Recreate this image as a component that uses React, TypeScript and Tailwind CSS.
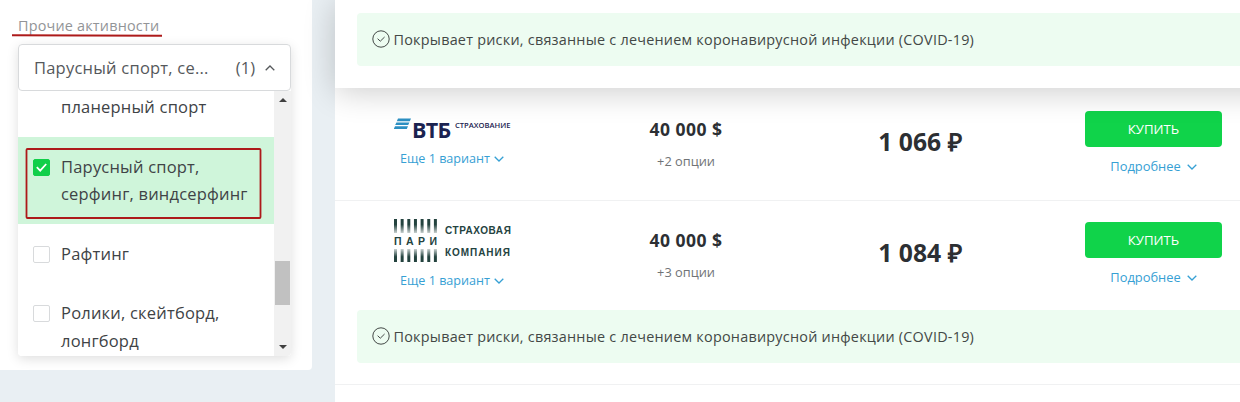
import React from "react";
import clsx from "clsx";

interface IActivity {
    lines: string[];
    checked?: boolean;
}

interface IOffer {
    id: string;
    logo: React.ReactNode;
    sum: string;
    options: string;
    price: string;
    covid?: boolean;
}

const activities: IActivity[] = [
    { lines: ["Парусный спорт,", "серфинг, виндсерфинг"], checked: true },
    { lines: ["Рафтинг"] },
    { lines: ["Ролики, скейтборд,", "лонгборд"] },
];

const Chevron: React.FC<{ up?: boolean; className?: string }> = ({ up, className }) => (
    <svg viewBox="0 0 10 6" fill="none" stroke="currentColor" strokeWidth="1.3" className={clsx("h-1.5 w-2.5", className)}>
        <path d={up ? "M0.7 5.2 5 1l4.3 4.2" : "M0.7 0.8 5 5l4.3-4.2"} />
    </svg>
);

const VtbLogo = () => (
    <div className="flex h-[22px] w-[118px] items-start text-[#1b2350]">
        <svg viewBox="0 0 17 12" className="ml-px h-3 w-[17px] shrink-0">
            <path d="M4 0.5h13l-1.2 2.7H2.8zM2.4 4.4h13l-1.2 2.7h-13zM1 8.3h13L12.8 11h-13z" fill="#2c8fc2" />
        </svg>
        <span className="mt-[2px] ml-px w-[39px] text-[21.5px] leading-5 font-bold tracking-[-0.7px]">ВТБ</span>
        <span className="mt-0.5 ml-[4px] text-[7.6px] leading-[10px] font-semibold whitespace-nowrap">СТРАХОВАНИЕ</span>
    </div>
);

const bars = [0, 1, 2, 3, 4, 5, 6];

const PariLogo = () => (
    <div className="flex h-[43px] w-[118px] gap-2 pl-px font-['Liberation_Sans',sans-serif] font-bold text-[#24433f]">
        <div className="flex w-[43px] flex-col justify-between">
            <svg viewBox="0 0 43 14" className="h-3.5 w-[43px]">
                <defs>
                    <linearGradient id="fadeDown" x1="0" y1="0" x2="0" y2="1">
                        <stop offset="0.4" stopColor="#24433f" />
                        <stop offset="1" stopColor="#24433f" stopOpacity="0.25" />
                    </linearGradient>
                </defs>
                {bars.map((bar) => (
                    <rect key={bar} x={bar * 6.65} width="3" height="14" fill="url(#fadeDown)" />
                ))}
            </svg>
            <div className="flex justify-between text-[10.5px] leading-[10px]">
                <span>П</span>
                <span>А</span>
                <span>Р</span>
                <span>И</span>
            </div>
            <svg viewBox="0 0 43 13" className="h-[13px] w-[43px]">
                <defs>
                    <linearGradient id="fadeUp" x1="0" y1="1" x2="0" y2="0">
                        <stop offset="0.4" stopColor="#24433f" />
                        <stop offset="1" stopColor="#24433f" stopOpacity="0.25" />
                    </linearGradient>
                </defs>
                {bars.map((bar) => (
                    <rect key={bar} x={bar * 6.65} width="3" height="13" fill="url(#fadeUp)" />
                ))}
            </svg>
        </div>
        <div className="flex flex-col gap-[10.5px] pt-1.5 text-[10px] leading-[11px]">
            <span className="tracking-[0.55px]">СТРАХОВАЯ</span>
            <span className="tracking-[0.95px]">КОМПАНИЯ</span>
        </div>
    </div>
);

const offers: IOffer[] = [
    { id: "vtb", logo: <VtbLogo />, sum: "40 000 $", options: "+2 опции", price: "1 066 ₽" },
    { id: "pari", logo: <PariLogo />, sum: "40 000 $", options: "+3 опции", price: "1 084 ₽", covid: true },
];

const Checkbox: React.FC<{ checked?: boolean }> = ({ checked }) => (
    <span
        className={clsx(
            "mt-1.5 flex size-[17px] shrink-0 items-center justify-center rounded-xs border",
            checked ? "border-[#10cf49] bg-[#10cf49]" : "border-[#d8dadc] bg-white",
        )}
    >
        {checked && (
            <svg viewBox="0 0 11 9" fill="none" stroke="white" strokeWidth="1.8" className="h-[9px] w-[11px]">
                <path d="M0.8 4.2 4.2 7.6 10.2 1" />
            </svg>
        )}
    </span>
);

const CovidNote = () => (
    <div className="ml-[22px] flex h-[53px] items-center rounded-l bg-[#edfcf1] pl-[15px] text-[#434846]">
        <svg viewBox="0 0 18 18" fill="none" stroke="currentColor" className="mr-[3.5px] mb-0.5 size-[18px]">
            <circle cx="9" cy="9" r="8.2" />
            <path d="m5.6 8.7 2.7 2.5 4.3-4.2" />
        </svg>
        <span className="text-[14.4px] tracking-[0.24px] whitespace-nowrap">
            Покрывает риски, связанные с лечением коронавирусной инфекции (COVID-19)
        </span>
    </div>
);

const OfferRow: React.FC<{ offer: IOffer }> = ({ offer }) => (
    <div className={clsx("flex", offer.covid ? "h-[109px]" : "h-28 pt-0.5")}>
        <div className={clsx("flex w-[234px] flex-col items-center", offer.covid ? "pt-[18px]" : "pt-[28px]")}>
            {offer.logo}
            <button className="mt-[9px] flex h-5 items-center gap-1 text-[12.6px] text-[#36a0d4]">
                Еще 1 вариант <Chevron />
            </button>
        </div>
        <div className="flex w-[234px] flex-col items-center pt-[27px]">
            <span className="text-[17.5px] leading-6 font-bold tracking-[0.5px] text-[#2c2f33]">{offer.sum}</span>
            <span className="mt-[10px] text-[12.8px] leading-5 text-[#707376]">{offer.options}</span>
        </div>
        <div className="flex w-[234px] justify-center pt-[36px]">
            <span className="text-[24.7px] leading-8 font-bold text-[#2c2f33]">{offer.price}</span>
        </div>
        <div className="flex w-[186px] flex-col items-center pt-[21px] pr-px pl-12">
            <button className="h-9 w-[137px] rounded bg-[#10d34a] pt-px text-[13.2px] text-white">КУПИТЬ</button>
            <button className="mt-2.5 flex h-5 items-center gap-1.5 text-[12.9px] text-[#36a0d4]">
                Подробнее <Chevron />
            </button>
        </div>
    </div>
);

const ActivityFilter = () => (
    <aside className="relative h-[370px] w-[312px] shrink-0 rounded-br bg-white pt-4 pl-[18px]">
        <div className="h-5 text-[14.4px] leading-5 tracking-[0.2px] text-[#929497]">Прочие активности</div>
        <div className="mt-2 w-[273px] rounded shadow-[0_3px_12px_rgba(0,0,0,0.13)]">
            <div className="flex h-[47px] items-center rounded border border-[#d8dadc] bg-white px-[15px] pt-px text-[16.5px] text-[#55585b]">
                <span className="flex-1 tracking-[0.22px]">Парусный спорт, се...</span>
                <span>(1)</span>
                <Chevron up className="ml-2.5" />
            </div>
            <div className="flex h-[265px] overflow-hidden rounded-b bg-white text-[16.5px] leading-[27.5px] tracking-[0.2px] text-[#404346]">
                <div className="w-64">
                    <div className="pt-0.5 pb-4 pl-[43px]">планерный спорт</div>
                    {activities.map((activity) => (
                        <div
                            key={activity.lines[0]}
                            className={clsx("flex gap-[11px] py-4 pl-[15px]", activity.checked && "bg-[#cff5da]")}
                        >
                            <Checkbox checked={activity.checked} />
                            <div className="whitespace-nowrap">
                                {activity.lines.map((line) => (
                                    <div key={line}>{line}</div>
                                ))}
                            </div>
                        </div>
                    ))}
                </div>
                <div className="flex w-[17px] flex-col items-center bg-[#f1f1f1] text-[#404040]">
                    <svg viewBox="0 0 8 4" className="mt-[7px] h-1 w-2" fill="currentColor">
                        <path d="M0 4 4 0l4 4z" />
                    </svg>
                    <div className="mt-[159px] h-11 w-[15px] bg-[#c1c1c1]" />
                    <svg viewBox="0 0 8 4" className="mt-10 h-1 w-2" fill="currentColor">
                        <path d="M0 0h8L4 4z" />
                    </svg>
                </div>
            </div>
        </div>
        {/* red marks over the filter */}
        <svg viewBox="0 0 312 370" fill="none" stroke="#ad1a1a" className="pointer-events-none absolute inset-0">
            <path d="M12 35.2 162 35.8" strokeWidth="2" />
            <rect x="26.5" y="149" width="234" height="69" rx="1" strokeWidth="1.8" />
        </svg>
    </aside>
);

const App: React.FC = () => {
    return (
        <div className="flex h-[402px] w-[1240px] overflow-hidden bg-[#e9eff3] font-['Open_Sans',sans-serif]">
            <ActivityFilter />
            <main className="ml-[23px] min-w-0 flex-1 bg-white">
                <div className="relative -mr-10 h-[88px] bg-white pt-[13px] shadow-[0_4px_32px_rgba(0,0,0,0.2)]">
                    <CovidNote />
                </div>
                {offers.map((offer) => (
                    <div key={offer.id} className="border-b border-[#f0f1f2]">
                        <OfferRow offer={offer} />
                        {offer.covid && (
                            <div className="pb-[21px]">
                                <CovidNote />
                            </div>
                        )}
                    </div>
                ))}
            </main>
        </div>
    );
};

export default App;
